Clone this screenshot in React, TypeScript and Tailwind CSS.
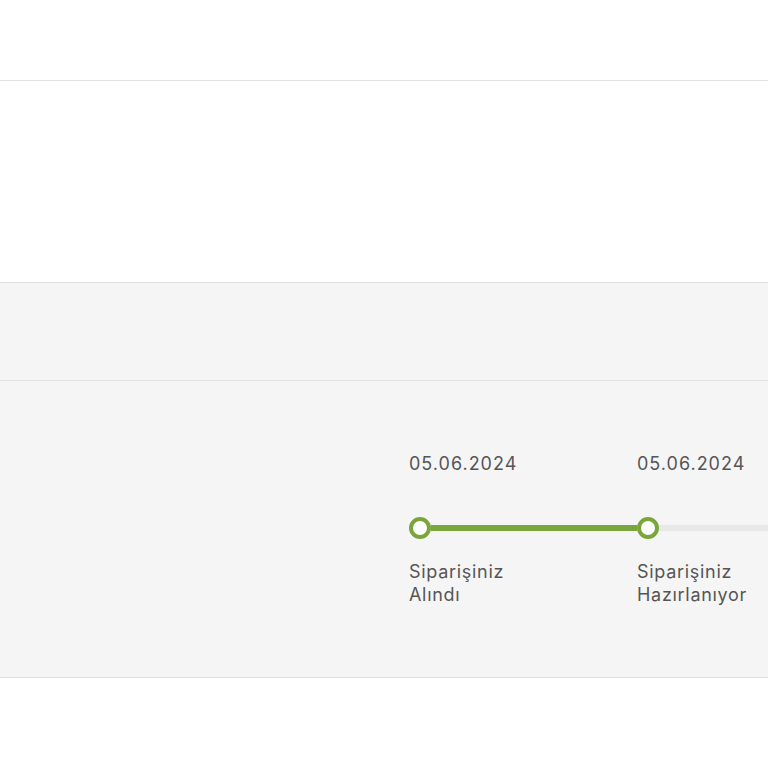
import React from "react";

const steps = [
  { date: "05.06.2024", label: ["Siparişiniz", "Alındı"], done: true, barDone: true },
  { date: "05.06.2024", label: ["Siparişiniz", "Hazırlanıyor"], done: true, barDone: false },
];

export default function App() {
  return (
    <div className="w-[768px] h-[768px] overflow-hidden bg-white text-[#555555]" style={{ fontFamily: "Inter, 'Open Sans', sans-serif" }}>
      <div className="h-[81px] border-b border-[#e3e3e3] bg-white" />
      <div className="h-[202px] border-b border-[#e0e0e0] bg-white" />
      <div className="h-[98px] border-b border-[#e3e3e3] bg-[#f5f5f5]" />
      <div className="h-[297px] border-b border-[#e0e0e0] bg-[#f5f5f5] pl-[409px] pt-[70px] overflow-hidden">
        <div className="flex w-[900px]">
          {steps.map((s, i) => (
            <div key={i} className="w-[228px] shrink-0 flex flex-col">
              <div className="h-[26px] text-[18px] leading-[26px] tracking-[1px]">{s.date}</div>
              <div className="mt-[40px] flex items-center h-[22px]">
                <div className="w-[22px] h-[22px] shrink-0 rounded-full border-[4px] border-[#78a63a] bg-white" />
                <div className={s.barDone ? "flex-1 h-[6px] bg-[#78a63a]" : "flex-1 h-[6px] bg-[#e8e8e8]"} />
              </div>
              <div className="mt-[21px] text-[18px] leading-[23px] tracking-[0.7px]">
                <div>{s.label[0]}</div>
                <div>{s.label[1]}</div>
              </div>
            </div>
          ))}
          <div className="w-[228px] shrink-0 flex flex-col">
            <div className="h-[26px]" />
            <div className="mt-[40px] flex items-center h-[22px]">
              <div className="flex-1 h-[6px] bg-[#e8e8e8]" />
            </div>
          </div>
        </div>
      </div>
      <div className="bg-white" />
    </div>
  );
}
